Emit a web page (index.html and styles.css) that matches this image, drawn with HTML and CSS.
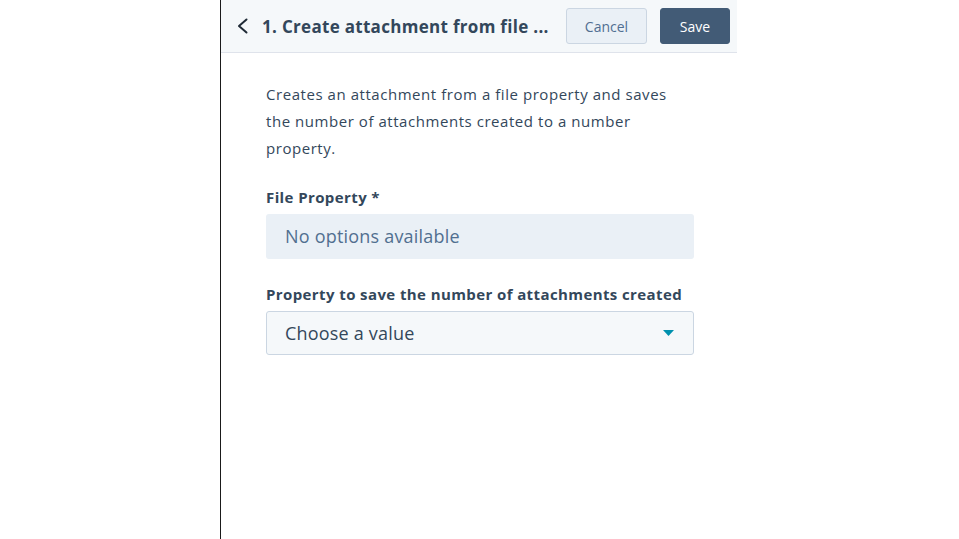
FILE: index.html
```html
<!DOCTYPE html>
<html lang="en">
<head>
<meta charset="utf-8">
<title>Create attachment from file</title>
<link rel="stylesheet" href="styles.css">
</head>
<body>
<div class="panel">
  <header class="panel-header">
    <button class="back" aria-label="Back">
      <svg width="13" height="16" viewBox="0 0 13 16"><path d="M10.5 1.5 L3 8 L10.5 14.5" fill="none" stroke="#1f2a36" stroke-width="2" stroke-linecap="round" stroke-linejoin="round"/></svg>
    </button>
    <h1 class="title">1. Create attachment from file ...</h1>
    <div class="actions">
      <button class="btn btn-cancel">Cancel</button>
      <button class="btn btn-save">Save</button>
    </div>
  </header>
  <main class="panel-body">
    <p class="desc">Creates an attachment from a file property and saves the number of attachments created to a number property.</p>
    <div class="field">
      <label class="label">File Property *</label>
      <div class="input disabled">No options available</div>
    </div>
    <div class="field">
      <label class="label">Property to save the number of attachments created</label>
      <div class="input select">
        <span>Choose a value</span>
        <svg class="caret" width="11" height="6" viewBox="0 0 11 6"><path d="M0 0 H11 L5.5 6 Z" fill="#0091ae"/></svg>
      </div>
    </div>
  </main>
</div>
</body>
</html>
```

FILE: styles.css
```css
* { box-sizing: border-box; }
html, body { margin: 0; height: 100%; background: #fff; }
body {
  font-family: "Open Sans", "Noto Sans", sans-serif;
  color: #33475b;
}
.panel {
  margin-left: 220px;
  width: 517px;
  min-height: 100vh;
  border-left: 1px solid #1a1a1a;
}
.panel-header {
  height: 53px;
  background: #f5f8fa;
  border-bottom: 1px solid #dfe3eb;
  display: flex;
  align-items: center;
  padding: 0 7px 0 15px;
}
.back {
  border: 0;
  background: none;
  padding: 0;
  width: 13px;
  height: 16px;
  display: flex;
  margin-right: 13px;
}
.title {
  margin: 0;
  font-size: 17px;
  font-weight: 700;
  color: #33475b;
  flex: 1;
  white-space: nowrap;
  letter-spacing: 0.3px;
}
.actions { display: flex; gap: 13px; }
.btn {
  height: 36px;
  border-radius: 3px;
  font-family: inherit;
  font-size: 14px;
  padding: 0;
}
.btn-cancel {
  width: 81px;
  background: #eaf0f6;
  border: 1px solid #cbd6e2;
  color: #506e91;
}
.btn-save {
  width: 70px;
  background: #425b76;
  border: 1px solid #425b76;
  color: #fff;
}
.panel-body {
  padding: 28px 43px 0 45px;
}
.desc {
  margin: 0 0 24px;
  font-size: 15px;
  line-height: 27px;
  letter-spacing: 0.55px;
  width: 410px;
}
.field { margin-bottom: 24px; }
.label {
  display: block;
  font-size: 15px;
  font-weight: 700;
  line-height: 22px;
  margin-bottom: 6px;
  letter-spacing: 0.4px;
}
.input {
  height: 45px;
  border-radius: 3px;
  display: flex;
  align-items: center;
  padding: 0 19px;
  font-size: 18px;
  letter-spacing: 0.2px;
}
.input.disabled {
  background: #eaf0f6;
  color: #516f90;
  padding-bottom: 2px;
}
.input.select {
  height: 44px;
  background: #f5f8fa;
  border: 1px solid #cbd6e2;
  justify-content: space-between;
  padding: 0 19px 0 18px;
}
.caret { display: block; }
```
